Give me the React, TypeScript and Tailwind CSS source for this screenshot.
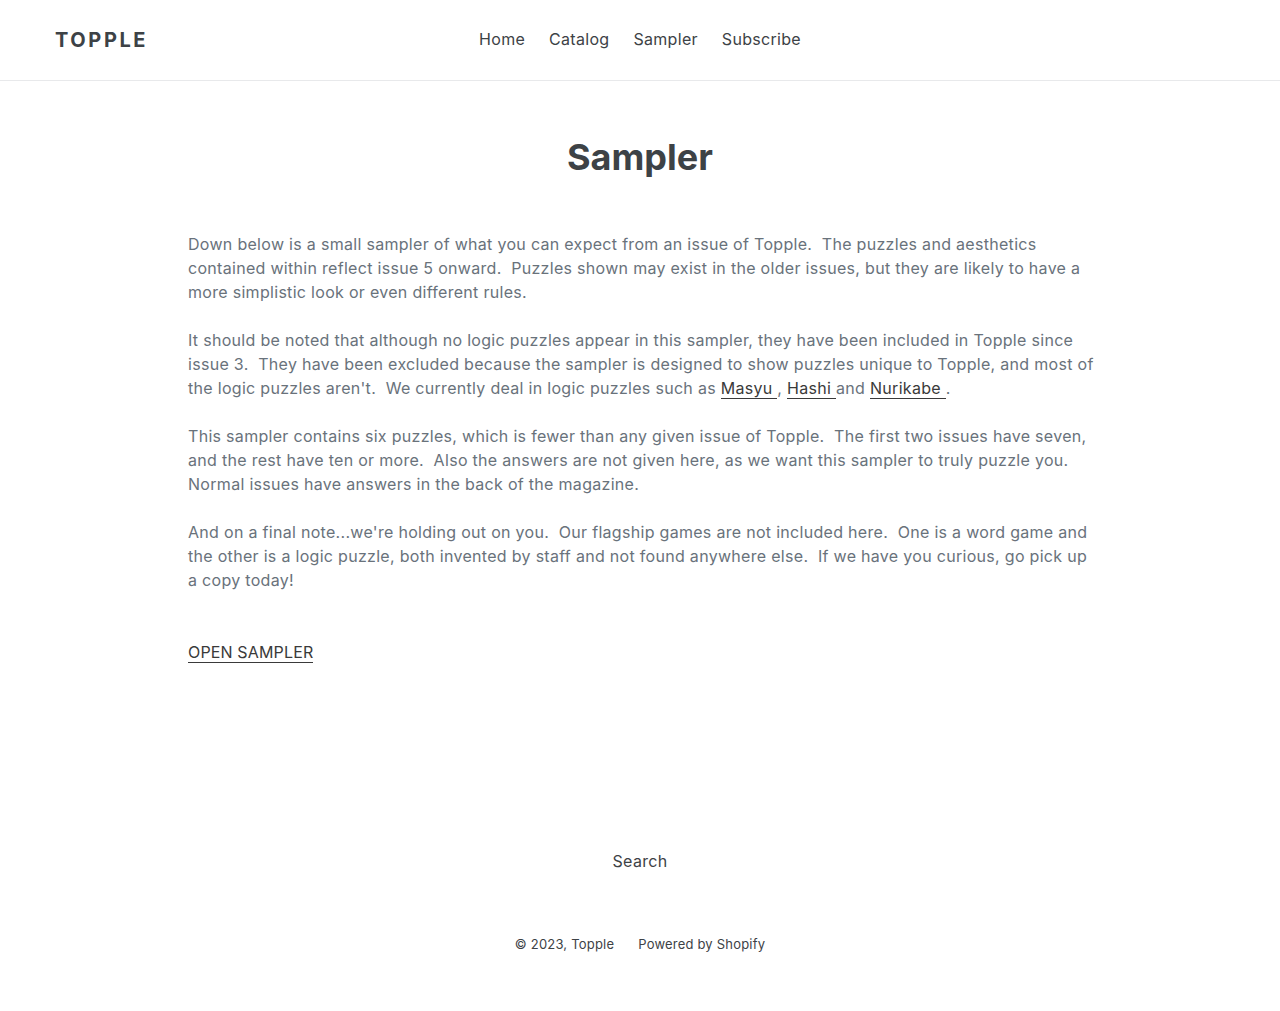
import React from 'react';

const font = { fontFamily: 'Inter, "Open Sans", "Liberation Sans", sans-serif' };

const Header = () => {
    return (
        <header className="h-[81px] border-b border-[#e8e9eb] px-[55px] flex items-center relative">
            <a href="#" className="text-[20px] font-bold tracking-[0.13em] text-[#3d4246]">TOPPLE</a>
            <nav className="absolute left-0 right-0 flex justify-center pointer-events-none -mt-[2px]">
                <ul className="flex pointer-events-auto text-[16px] tracking-[0.3px] text-[#3d4246]">
                    <li className="px-3"><a href="#">Home</a></li>
                    <li className="px-3"><a href="#">Catalog</a></li>
                    <li className="px-3"><a href="#">Sampler</a></li>
                    <li className="px-3"><a href="#">Subscribe</a></li>
                </ul>
            </nav>
        </header>
    );
};

const Lnk = ({ children }: { children: React.ReactNode }) => (
    <a href="#" className="text-[#3a3a3a] border-b border-[#3a3a3a]">{children}</a>
);

export default function App() {
    return (
        <div className="min-h-[1011px] bg-white" style={font}>
            <Header />
            <main className="w-[904px] mx-auto pt-[54px]">
                <h1 className="text-center text-[36px] font-bold text-[#3d4246] leading-[1.3] -mt-px">Sampler</h1>
                <div className="mt-[51px] text-[16px] leading-6 tracking-[0.3px] text-[#69727b] whitespace-nowrap">
                    <p className="mb-6">Down below is a small sampler of what you can expect from an issue of Topple.&nbsp; The puzzles and aesthetics<br />contained within reflect issue 5 onward.&nbsp; Puzzles shown may exist in the older issues, but they are likely to have a<br />more simplistic look or even different rules.</p>
                    <p className="mb-6">It should be noted that although no logic puzzles appear in this sampler, they have been included in Topple since<br />issue 3.&nbsp; They have been excluded because the sampler is designed to show puzzles unique to Topple, and most of<br />the logic puzzles aren't.&nbsp; We currently deal in logic puzzles such as <Lnk>Masyu </Lnk>, <Lnk>Hashi </Lnk>and <Lnk>Nurikabe </Lnk>.</p>
                    <p className="mb-6">This sampler contains six puzzles, which is fewer than any given issue of Topple.&nbsp; The first two issues have seven,<br />and the rest have ten or more.&nbsp; Also the answers are not given here, as we want this sampler to truly puzzle you.<br />Normal issues have answers in the back of the magazine.</p>
                    <p className="mb-12">And on a final note...we're holding out on you.&nbsp; Our flagship games are not included here.&nbsp; One is a word game and<br />the other is a logic puzzle, both invented by staff and not found anywhere else.&nbsp; If we have you curious, go pick up<br />a copy today!</p>
                    <p className="tracking-[0.15px]"><Lnk>OPEN SAMPLER</Lnk></p>
                </div>
            </main>
            <footer className="mt-[185px] text-center">
                <a href="#" className="text-[16px] tracking-[0.3px] text-[#3d4246]">Search</a>
                <div className="mt-[62px] flex justify-center gap-6 text-[13px] tracking-[0.2px] text-[#3d4246]">
                    <span>© 2023, <a href="#">Topple</a></span>
                    <a href="#">Powered by Shopify</a>
                </div>
            </footer>
        </div>
    );
}
